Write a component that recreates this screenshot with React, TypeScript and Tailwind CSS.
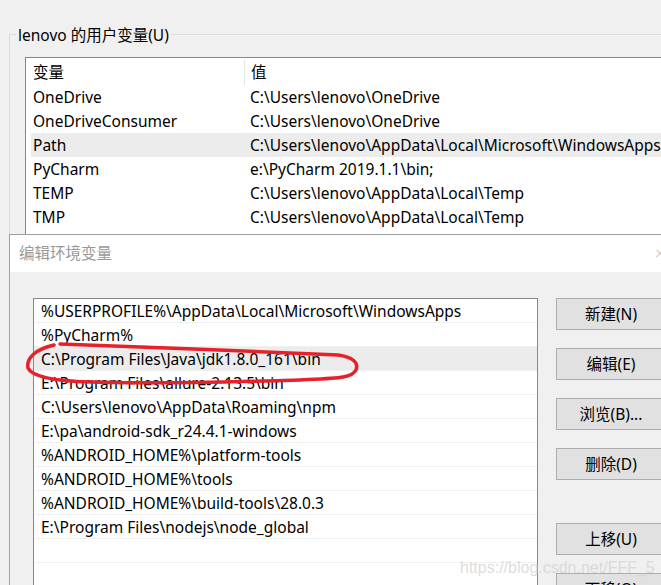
const font = { fontFamily: '"Noto Sans", "Noto Sans CJK SC", sans-serif' };

const userVars = [
  ["OneDrive", "C:\\Users\\lenovo\\OneDrive"],
  ["OneDriveConsumer", "C:\\Users\\lenovo\\OneDrive"],
  ["Path", "C:\\Users\\lenovo\\AppData\\Local\\Microsoft\\WindowsApps;"],
  ["PyCharm", "e:\\PyCharm 2019.1.1\\bin;"],
  ["TEMP", "C:\\Users\\lenovo\\AppData\\Local\\Temp"],
  ["TMP", "C:\\Users\\lenovo\\AppData\\Local\\Temp"],
];

const paths = [
  "%USERPROFILE%\\AppData\\Local\\Microsoft\\WindowsApps",
  "%PyCharm%",
  "C:\\Program Files\\Java\\jdk1.8.0_161\\bin",
  "E:\\Program Files\\allure-2.13.5\\bin",
  "C:\\Users\\lenovo\\AppData\\Roaming\\npm",
  "E:\\pa\\android-sdk_r24.4.1-windows",
  "%ANDROID_HOME%\\platform-tools",
  "%ANDROID_HOME%\\tools",
  "%ANDROID_HOME%\\build-tools\\28.0.3",
  "E:\\Program Files\\nodejs\\node_global",
  "",
  "",
];

const buttons = [
  { label: "新建(N)", gap: "" },
  { label: "编辑(E)", gap: "mt-[18px]" },
  { label: "浏览(B)...", gap: "mt-[18px]" },
  { label: "删除(D)", gap: "mt-[18px]" },
  { label: "上移(U)", gap: "mt-[43px]" },
  { label: "下移(O)", gap: "mt-[18px]" },
];

const App = () => {
  return (
    <div
      className="relative h-[585px] w-[661px] overflow-hidden bg-[#f0f0f0] text-[15.5px] text-black"
      style={font}
    >
      {/* user variables group box */}
      <div className="absolute left-[9px] top-[34px] h-[260px] w-[700px] border-l border-t border-[#dcdcdc]" />
      <div className="absolute left-[16px] top-[24px] bg-[#f0f0f0] px-[2px] leading-[22px]">
        lenovo 的用户变量(U)
      </div>

      <div className="absolute left-[25px] top-[57px] h-[200px] w-[700px] border border-[#828790] bg-white">
        <div className="flex h-[27px] items-center pt-[2px]">
          <div className="w-[218px] pl-[7px]">变量</div>
          <div className="h-[25px] w-px bg-[#e5e5e5]" />
          <div className="pl-[6px]">值</div>
        </div>
        {userVars.map(([name, value]) => (
          <div
            key={name}
            className={`ml-[5px] flex h-[24px] items-center whitespace-nowrap pt-[2px] ${
              name === "Path" ? "bg-[#ececec]" : ""
            }`}
          >
            <div className="w-[219px] pl-[2px]">{name}</div>
            <div>{value}</div>
          </div>
        ))}
      </div>

      {/* edit dialog */}
      <div className="absolute left-[9px] top-[234px] h-[400px] w-[700px] border-l border-t border-[#a0a0a0] bg-[#f0f0f0]">
        <div className="flex h-[37px] items-center justify-between bg-white pl-[9px] pr-[44px] text-[#999999]">
          <span>编辑环境变量</span>
          <span className="text-[18px] font-light text-[#c8c8c8]">×</span>
        </div>
        <div className="flex pl-[23px] pt-[26px]">
          <div className="h-[300px] w-[505px] border border-[#828790] bg-white">
            {paths.map((p, i) => (
              <div
                key={i}
                className={`flex h-[24px] items-center whitespace-nowrap border-b border-[#f0f0f0] pl-[7px] pt-[2px] ${
                  i === 2 ? "bg-[#ececec]" : ""
                }`}
              >
                {p}
              </div>
            ))}
          </div>
          <div className="ml-[18px] flex flex-col">
            {buttons.map((b) => (
              <div
                key={b.label}
                className={`flex h-[32px] w-[110px] items-center justify-center border border-[#adadad] bg-[#e1e1e1] pt-[1px] ${b.gap}`}
              >
                {b.label}
              </div>
            ))}
          </div>
        </div>
      </div>

      {/* red hand-drawn mark */}
      <svg
        className="absolute left-0 top-0"
        width="661"
        height="585"
        viewBox="0 0 661 585"
        fill="none"
      >
        <path
          d="M60 344 C150 347 250 351 338 355 C352 357 359 362 356 370 C352 378 340 378 300 380 C230 382 150 384 90 382 C55 381 32 377 28 368 C26 358 36 349 54 345"
          stroke="#e8202a"
          strokeWidth="3.5"
          strokeLinecap="round"
        />
      </svg>

      {/* watermark */}
      <div
        className="absolute left-[460px] top-[556px] text-[16px] text-[#d4d4d4]/80"
        style={{ fontFamily: '"Liberation Sans", Arial, sans-serif' }}
      >
        https://blog.csdn.net/FFF_5
      </div>
    </div>
  );
};

export default App;
